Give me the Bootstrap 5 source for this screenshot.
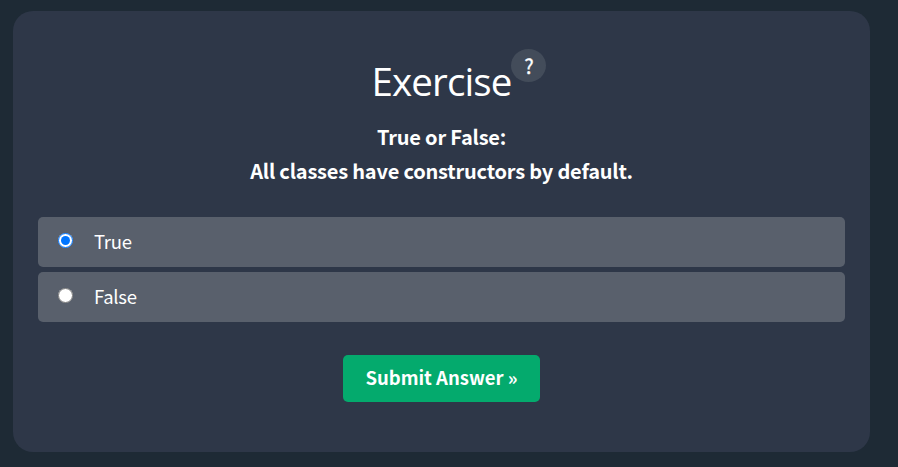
<!DOCTYPE html>
<html lang="en">
<head>
<meta charset="utf-8">
<meta name="viewport" content="width=device-width, initial-scale=1">
<title>Exercise</title>
<link href="https://cdn.jsdelivr.net/npm/bootstrap@5.3.0/dist/css/bootstrap.min.css" rel="stylesheet">
<style>
body{background:#1e2a35;color:#fff;font-family:"Noto Sans CJK SC","Noto Sans",sans-serif;height:467px;overflow:hidden}
.quiz{margin:11px 28px 0 13px;height:441px;background:#2e3748;border-radius:20px;padding:0 25px}
.quiz-title{font-family:"Open Sans","Noto Sans",sans-serif;font-size:38.5px;line-height:60px;font-weight:400;margin:40px 0 0 35px;letter-spacing:-.9px}
.help{width:35px;height:33px;border-radius:50%;background:#434c5a;font-size:20px;font-weight:400;margin-top:38px;-webkit-text-stroke:.3px}
.question{font-size:20px;line-height:34px;font-weight:700;margin:9px 0 29px;letter-spacing:-.2px}
.choice{height:50px;background:#59606c;border-radius:5px;font-size:18.5px;letter-spacing:-.3px;padding-left:20px;gap:21px;margin-bottom:5px}
.choice input{width:15px;height:15px;margin:0 0 4px}
.submit{width:197px;height:47px;background:#04aa6d;color:#fff;border-radius:5px;font-size:18.5px;font-weight:700;padding:0 0 2px;margin-top:28px}
.submit:hover{background:#059862;color:#fff}
</style>
</head>
<body>
<main class="quiz d-flex flex-column">
<div class="d-flex justify-content-center align-items-start"><h1 class="quiz-title">Exercise</h1><span class="help d-flex align-items-center justify-content-center">?</span></div>
<p class="question text-center">True or False:<br>All classes have constructors by default.</p>
<form class="d-flex flex-column">
<label class="choice d-flex align-items-center"><input type="radio" name="answer" checked><span>True</span></label>
<label class="choice d-flex align-items-center"><input type="radio" name="answer"><span>False</span></label>
<button type="button" class="submit btn align-self-center">Submit Answer »</button>
</form>
</main>
<script src="https://cdn.jsdelivr.net/npm/bootstrap@5.3.0/dist/js/bootstrap.bundle.min.js"></script>
</body>
</html>
